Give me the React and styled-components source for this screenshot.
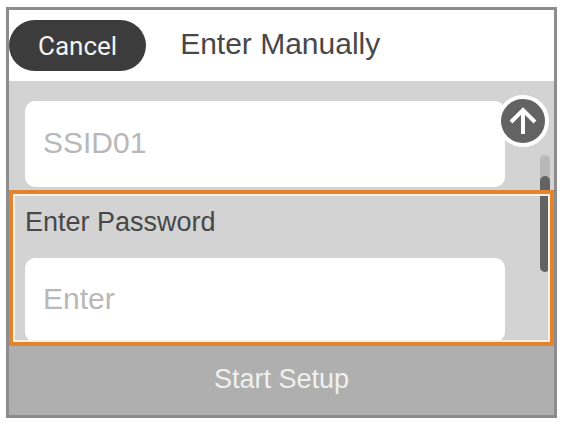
import { useState } from 'react';
import styled, { createGlobalStyle } from 'styled-components';

const GlobalStyle = createGlobalStyle`
  * {
    box-sizing: border-box;
  }

  body {
    margin: 0;
    background-color: #ffffff;
    font-family: 'Liberation Sans', Arial, sans-serif;
  }

  button,
  input {
    font-family: inherit;
  }
`;

const Screen = styled.main`
  margin: 7px 7px 4px 6px;
  border: 3px solid #8c8c8c;

  display: flex;
  flex-direction: column;
  background-color: #d3d3d3;
`;

const Header = styled.header`
  padding: 10px 0;

  display: flex;
  align-items: center;
  gap: 34px;

  background-color: #ffffff;
`;

const CancelButton = styled.button`
  height: 51px;
  padding: 0 29px;

  border: none;
  border-radius: 26px;
  background-color: #3c3c3c;

  color: #f2f2f2;
  font-family: Roboto, 'Liberation Sans', sans-serif;
  font-size: 26px;
  cursor: pointer;
`;

const Title = styled.h1`
  margin: 0;
  padding-bottom: 4px;

  color: #484848;
  font-weight: 400;
  font-size: 30px;
  line-height: 32px;
`;

const Body = styled.div`
  position: relative;

  display: flex;
  flex-direction: column;
`;

const Field = styled.div`
  display: flex;
  flex-direction: column;
  padding: 20px 49px 3px 16px;
`;

/* border and inner line stay above the scrollbar */
const ActiveField = styled(Field)`
  position: relative;
  z-index: 1;
  padding: 8px 45px 0 12px;

  border: 4px solid #e2832f;

  &::after {
    content: '';
    position: absolute;
    inset: 0;
    border: 2px solid #fdf1e4;
    pointer-events: none;
  }
`;

const Label = styled.label`
  margin-bottom: 16px;

  color: #484848;
  font-size: 27px;
  line-height: 40px;
`;

const TextInput = styled.input`
  width: 100%;
  height: ${(props) => (props.$short ? '84px' : '86px')};
  padding: 0 18px 2px;

  border: none;
  border-radius: 10px;
  outline: none;
  background-color: #ffffff;

  color: #b8b8b8;
  font-size: 30px;

  &::placeholder {
    color: #b8b8b8;
    opacity: 1;
  }
`;

const ScrollTopButton = styled.button`
  position: absolute;
  top: 14px;
  right: 5px;
  width: 52px;
  height: 52px;
  padding: 0;

  display: flex;
  justify-content: center;
  align-items: center;

  border: 4px solid #ffffff;
  border-radius: 50%;
  background-color: #636363;
  cursor: pointer;
`;

const ScrollTrack = styled.div`
  position: absolute;
  top: 74px;
  right: 4px;
  width: 10px;
  height: 117px;

  display: flex;
  align-items: flex-end;

  border-radius: 5px;
  background-color: #b9b9b9;
`;

const ScrollThumb = styled.div`
  width: 100%;
  height: 96px;

  border-radius: 5px;
  background-color: #636363;
`;

const StartButton = styled.button`
  height: 69px;
  padding: 0 0 3px;

  border: none;
  background-color: #afafaf;

  color: #f0f0f0;
  font-size: 27px;
  cursor: pointer;
`;

const ArrowUp = () => (
  <svg
    width="44"
    height="44"
    viewBox="0 0 44 44"
    fill="none"
    stroke="#ffffff"
    strokeWidth="4"
    aria-hidden="true"
  >
    <path d="M22 35V11" />
    <path d="M10 23L22 11L34 23" />
  </svg>
);

export default function App() {
  const [ssid, setSsid] = useState('SSID01');
  const [password, setPassword] = useState('');

  return (
    <>
      <GlobalStyle />
      <Screen>
        <Header>
          <CancelButton type="button">Cancel</CancelButton>
          <Title>Enter Manually</Title>
        </Header>
        <Body>
          <Field>
            <TextInput
              aria-label="SSID"
              value={ssid}
              onChange={(e) => setSsid(e.target.value)}
            />
          </Field>
          <ActiveField>
            <Label htmlFor="password">Enter Password</Label>
            <TextInput
              $short
              id="password"
              placeholder="Enter"
              value={password}
              onChange={(e) => setPassword(e.target.value)}
            />
          </ActiveField>
          <ScrollTrack>
            <ScrollThumb />
          </ScrollTrack>
          <ScrollTopButton type="button" aria-label="Scroll up">
            <ArrowUp />
          </ScrollTopButton>
        </Body>
        <StartButton type="button">Start Setup</StartButton>
      </Screen>
    </>
  );
}
